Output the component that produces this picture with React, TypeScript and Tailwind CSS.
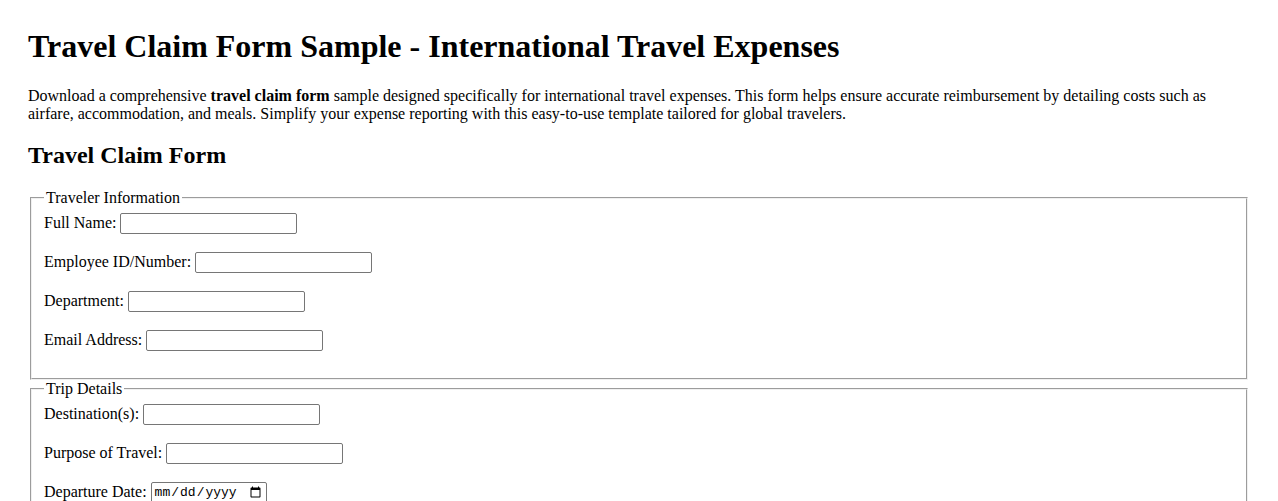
import React from 'react';

interface FieldProps {
  label: string;
  type?: string;
}

const inputClass =
  "h-[21px] border border-[#767676] rounded-[2px] bg-white px-[2px] font-['Liberation_Mono',monospace] text-[13px] leading-[15px] text-black";

const Field: React.FC<FieldProps> = ({ label, type = 'text' }) => (
  <div className="flex h-[21px] items-center gap-[4px]">
    <label className="mb-[2px] leading-[18px]">{label}</label>
    {type === 'date' ? (
      <input type="date" className={`${inputClass} w-[116px]`} />
    ) : (
      <input type={type} className={`${inputClass} w-[177px]`} />
    )}
  </div>
);

const Section: React.FC<{ title: string; children: React.ReactNode }> = ({ title, children }) => (
  <fieldset className="mx-[2px] border-2 border-[#f0f0f0] [--tw-border-style:groove] px-[12px] pt-[6px] pb-[27px]">
    <legend className="px-[2px] leading-[18px]">{title}</legend>
    <div className="flex flex-col gap-[18px]">{children}</div>
  </fieldset>
);

export default function App() {
  return (
    <div className="min-h-screen bg-white px-[28px] pt-[28px] pb-10 font-['Liberation_Serif',serif] text-[16px] text-black">
      <h1 className="text-[32px] font-bold leading-[36px]">
        Travel Claim Form Sample - International Travel Expenses
      </h1>
      <p className="mt-[23px] leading-[18px]">
        Download a comprehensive <b>travel claim form</b> sample designed specifically for
        international travel expenses. This form helps ensure accurate reimbursement by detailing
        costs such as airfare, accommodation, and meals. Simplify your expense reporting with this
        easy-to-use template tailored for global travelers.
      </p>
      <h2 className="mt-[18px] text-[24px] font-bold leading-[28px]">Travel Claim Form</h2>

      <form className="mt-[20px]">
        <Section title="Traveler Information">
          <Field label="Full Name:" />
          <Field label="Employee ID/Number:" />
          <Field label="Department:" />
          <Field label="Email Address:" type="email" />
        </Section>

        <Section title="Trip Details">
          <Field label="Destination(s):" />
          <Field label="Purpose of Travel:" />
          <Field label="Departure Date:" type="date" />
          <Field label="Return Date:" type="date" />
        </Section>

        <Section title="Expense Details">
          <Field label="Airfare:" type="number" />
          <Field label="Accommodation:" type="number" />
          <Field label="Meals:" type="number" />
          <Field label="Local Transportation:" type="number" />
        </Section>
      </form>
    </div>
  );
}
